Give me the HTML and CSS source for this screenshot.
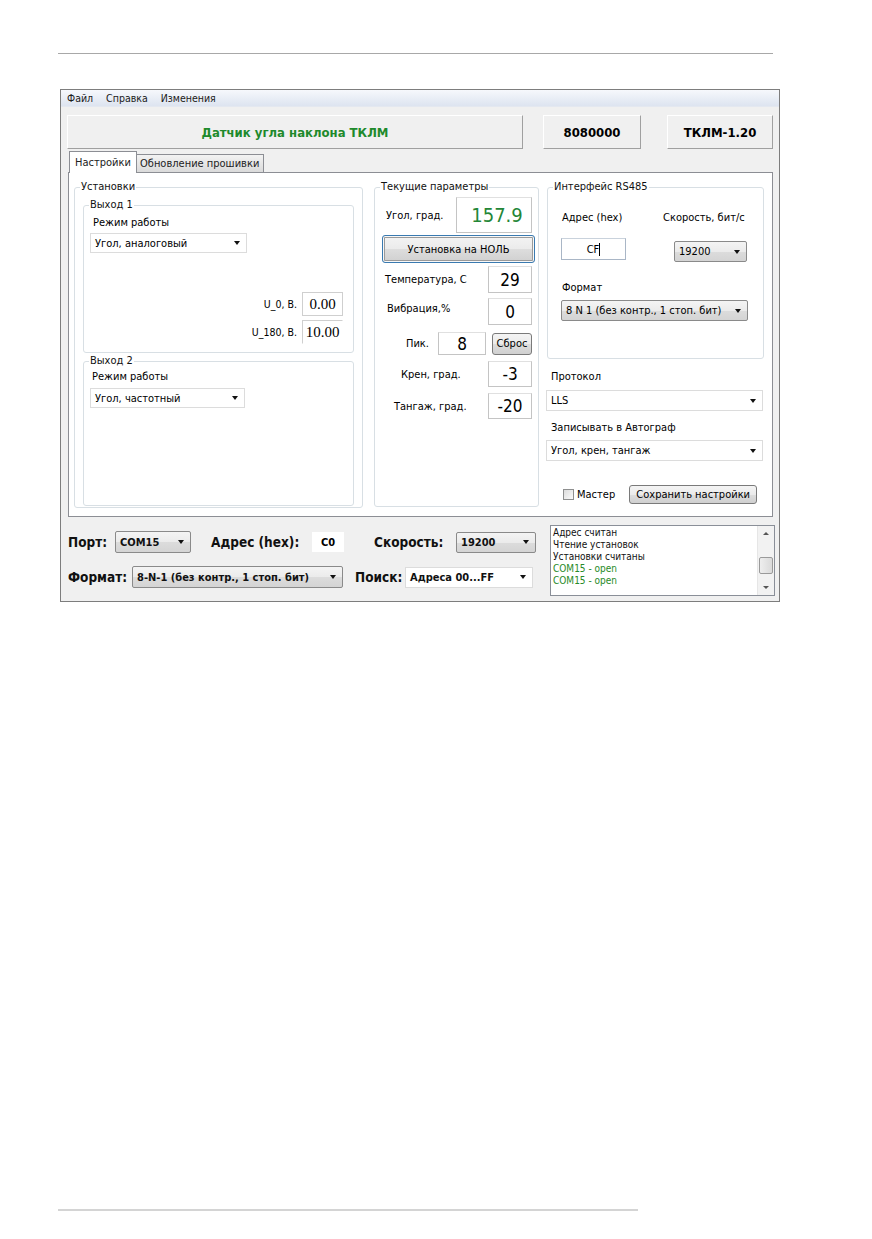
FILE: index.html
```html
<!DOCTYPE html>
<html lang="ru">
<head>
<meta charset="utf-8">
<title>Датчик угла наклона ТКЛМ</title>
<link rel="stylesheet" href="styles.css">
</head>
<body>
<div class="page">
  <div class="rule-top"></div>
  <div class="window">
    <div class="menubar">
      <span>Файл</span><span>Справка</span><span>Изменения</span>
    </div>
    <div class="header">
      <div class="hpanel hp-title">Датчик угла наклона ТКЛМ</div>
      <div class="hpanel hp-serial">8080000</div>
      <div class="hpanel hp-ver">ТКЛМ-1.20</div>
    </div>
    <div class="tabs">
      <div class="tab active">Настройки</div>
      <div class="tab">Обновление прошивки</div>
    </div>
    <div class="tabpage">
      <div class="group g-settings">
        <span class="gtitle">Установки</span>
        <div class="group g-out1">
          <span class="gtitle">Выход 1</span>
          <div class="lbl mode-lbl">Режим работы</div>
          <div class="combo flat c-mode"><span class="ctext">Угол, аналоговый</span><span class="arrow"></span></div>
          <div class="urow u0">
            <span class="ulbl">U_0, В.</span>
            <div class="uinput">0.00</div>
          </div>
          <div class="urow u180">
            <span class="ulbl">U_180, В.</span>
            <div class="uinput open">10.00</div>
          </div>
        </div>
        <div class="group g-out2">
          <span class="gtitle">Выход 2</span>
          <div class="lbl mode-lbl">Режим работы</div>
          <div class="combo flat c-mode2"><span class="ctext">Угол, частотный</span><span class="arrow"></span></div>
        </div>
      </div>

      <div class="group g-current">
        <span class="gtitle">Текущие параметры</span>
        <div class="prow r-angle">
          <span class="plbl">Угол, град.</span>
          <div class="pval big">157.9</div>
        </div>
        <div class="btn focus b-zero">Установка на НОЛЬ</div>
        <div class="prow r-temp">
          <span class="plbl">Температура, С</span>
          <div class="pval">29</div>
        </div>
        <div class="prow r-vib">
          <span class="plbl">Вибрация,%</span>
          <div class="pval">0</div>
        </div>
        <div class="prow r-peak">
          <span class="plbl">Пик.</span>
          <div class="pval peak">8</div>
          <div class="btn b-reset">Сброс</div>
        </div>
        <div class="prow r-roll">
          <span class="plbl">Крен, град.</span>
          <div class="pval">-3</div>
        </div>
        <div class="prow r-pitch">
          <span class="plbl">Тангаж, град.</span>
          <div class="pval">-20</div>
        </div>
      </div>

      <div class="rightcol">
        <div class="group g-rs">
          <span class="gtitle">Интерфейс RS485</span>
          <div class="rs-top">
            <div class="rs-col a">
              <div class="lbl">Адрес (hex)</div>
              <div class="addr-input">CF<span class="caret"></span></div>
            </div>
            <div class="rs-col b">
              <div class="lbl">Скорость, бит/с</div>
              <div class="combo raised c-speed"><span class="ctext">19200</span><span class="arrow"></span></div>
            </div>
          </div>
          <div class="lbl fmt-lbl">Формат</div>
          <div class="combo raised c-fmt"><span class="ctext">8 N 1 (без контр., 1 стоп. бит)</span><span class="arrow"></span></div>
        </div>
        <div class="lbl proto-lbl">Протокол</div>
        <div class="combo flat c-wide"><span class="ctext">LLS</span><span class="arrow"></span></div>
        <div class="lbl auto-lbl">Записывать в Автограф</div>
        <div class="combo flat c-wide c-auto"><span class="ctext">Угол, крен, тангаж</span><span class="arrow"></span></div>
        <div class="save-row">
          <span class="check"></span><span class="check-lbl">Мастер</span>
          <div class="btn b-save">Сохранить настройки</div>
        </div>
      </div>
    </div>

    <div class="bottom">
      <div class="bottom-left">
        <div class="brow r1">
          <span class="blbl w-port">Порт:</span>
          <div class="combo raised bc c-port"><span class="ctext">COM15</span><span class="arrow"></span></div>
          <span class="blbl w-addr">Адрес (hex):</span>
          <div class="binput">C0</div>
          <span class="blbl w-speed">Скорость:</span>
          <div class="combo raised bc c-bspeed"><span class="ctext">19200</span><span class="arrow"></span></div>
        </div>
        <div class="brow r2">
          <span class="blbl w-fmt">Формат:</span>
          <div class="combo raised bc c-bfmt"><span class="ctext">8-N-1 (без контр., 1 стоп. бит)</span><span class="arrow"></span></div>
          <span class="blbl w-search">Поиск:</span>
          <div class="combo flat bc c-search"><span class="ctext">Адреса 00...FF</span><span class="arrow"></span></div>
        </div>
      </div>
      <div class="log">
        <div class="log-lines">
          <div>Адрес считан</div>
          <div>Чтение установок</div>
          <div>Установки считаны</div>
          <div class="ok">COM15 - open</div>
          <div class="ok">COM15 - open</div>
        </div>
        <div class="scroll">
          <span class="sarrow up"></span>
          <span class="thumb"></span>
          <span class="sarrow down"></span>
        </div>
      </div>
    </div>
  </div>
  <div class="rule-bottom"></div>
</div>
</body>
</html>
```

FILE: styles.css
```css
body {
  margin: 0;
  background: #fff;
  font-family: "DejaVu Sans Condensed", "DejaVu Sans", sans-serif;
  font-size: 11px;
  color: #000;
}

.page {
  padding: 53px 0 0 58px;
}

.rule-top {
  width: 715px;
  height: 1px;
  background: #a8a8a8;
}

.rule-bottom {
  width: 580px;
  height: 2px;
  margin-top: 607px;
  background: #d4d4d4;
}

.window {
  width: 718px;
  height: 511px;
  margin: 35px 0 0 2px;
  border: 1px solid #7d7d7d;
  background: #f0f0f0;
}

.menubar {
  height: 16px;
  display: flex;
  gap: 13px;
  align-items: center;
  padding-left: 6px;
  background: linear-gradient(#f6f8fc, #dde4f0);
  border-bottom: 1px solid #e4e8f0;
  font-size: 10.5px;
  color: #1a1a1a;
}

.header {
  display: flex;
  margin: 8px 0 0 6px;
  height: 34px;
}

.hpanel {
  box-sizing: border-box;
  height: 34px;
  display: flex;
  align-items: center;
  justify-content: center;
  border-top: 1px solid #fff;
  border-left: 1px solid #fff;
  border-right: 1px solid #a0a0a0;
  border-bottom: 1px solid #a0a0a0;
  font-weight: bold;
  font-size: 13px;
}

.hp-title { width: 456px; color: #1e8a2c; }
.hp-serial { width: 98px; margin-left: 20px; }
.hp-ver { width: 106px; margin-left: 26px; }

.tabs {
  display: flex;
  align-items: flex-end;
  margin: 2px 0 0 8px;
  height: 21px;
}

.tab {
  box-sizing: border-box;
  height: 18px;
  padding: 0 3px;
  display: flex;
  align-items: center;
  border: 1px solid #8c8e94;
  border-bottom: none;
  background: linear-gradient(#f3f3f3, #dadada);
  color: #222;
}

.tab.active {
  height: 22px;
  width: 68px;
  justify-content: center;
  background: #fff;
  margin-bottom: -1px;
  position: relative;
  z-index: 1;
}

.tab:not(.active) { width: 127px; border-left: none; }

.tabpage {
  box-sizing: border-box;
  width: 705px;
  height: 345px;
  margin-left: 7px;
  border: 1px solid #8c8e94;
  background: #fff;
  display: flex;
  align-items: flex-start;
  padding: 14px 0 0 5px;
}

.group {
  box-sizing: border-box;
  border: 1px solid #d8dfe4;
  border-radius: 3px;
  background: #fff;
}

.gtitle {
  display: block;
  width: max-content;
  margin: -7px 0 0 5px;
  padding: 0 1px;
  line-height: 12px;
  height: 12px;
  background: #fff;
  color: #111;
}

.lbl { line-height: 12px; height: 12px; }

.g-settings { width: 289px; height: 321px; }

.g-out1 {
  width: 271px;
  height: 148px;
  margin: 12px 0 0 8px;
}

.g-out2 {
  width: 271px;
  height: 145px;
  margin: 8px 0 0 8px;
}

.mode-lbl { margin: 6px 0 0 9px; }
.g-out2 .mode-lbl { margin: 4px 0 0 8px; }

.combo {
  box-sizing: border-box;
  height: 20px;
  display: flex;
  align-items: center;
  justify-content: space-between;
  padding: 0 6px 0 4px;
  white-space: nowrap;
}

.combo.flat {
  background: #fff;
  border: 1px solid #dcdcdc;
}

.combo.raised {
  background: linear-gradient(#f4f4f4 0%, #ebebeb 50%, #dcdcdc 51%, #d4d4d4 100%);
  border: 1px solid #8a8a8a;
  border-radius: 2px;
}

.arrow {
  width: 0;
  height: 0;
  border-left: 3.5px solid transparent;
  border-right: 3.5px solid transparent;
  border-top: 4px solid #111;
  flex: none;
}

.c-mode { width: 157px; margin: 4px 0 0 6px; }
.c-mode2 { width: 155px; margin: 5px 0 0 6px; }

.urow {
  display: flex;
  justify-content: flex-end;
  align-items: center;
  margin-right: 10px;
  gap: 5px;
}

.u0 { margin-top: 39px; }
.u180 { margin-top: 4px; }

.uinput {
  box-sizing: border-box;
  width: 41px;
  height: 24px;
  display: flex;
  align-items: center;
  justify-content: center;
  border: 1px solid #cfcfcf;
  font-family: "Liberation Serif", serif;
  font-size: 15px;
}

.uinput.open {
  border-right-color: transparent;
  border-bottom-color: transparent;
}

.ulbl { font-size: 10.5px; }

.g-current {
  width: 165px;
  height: 320px;
  margin-left: 11px;
}

.prow {
  display: flex;
  align-items: center;
  margin-right: 6px;
}

.plbl { flex: 1; }

.pval {
  box-sizing: border-box;
  width: 44px;
  height: 27px;
  display: flex;
  align-items: center;
  justify-content: center;
  border: 1px solid #c4c4c4;
  border-top-color: #e0e0e0;
  font-size: 17px;
}

.pval.big {
  width: 76px;
  height: 36px;
  color: #238636;
  font-size: 20px;
  padding-left: 6px;
}

.r-angle { margin-top: 4px; }
.r-angle .plbl { padding-left: 11px; }
.r-temp { margin-top: 3px; }
.r-temp .plbl { padding-left: 10px; }
.r-vib { margin-top: 5px; }
.r-vib .plbl { padding-left: 12px; margin-top: -6px; }
.r-peak { margin-top: 7px; }
.r-peak .plbl { padding-left: 31px; flex: none; width: 63px; box-sizing: border-box; }
.r-roll { margin-top: 6px; height: 26px; }
.r-roll .plbl { padding-left: 26px; }
.r-pitch { margin-top: 6px; height: 26px; }
.r-pitch .plbl { padding-left: 19px; }
.r-roll .pval, .r-pitch .pval { height: 26px; }

.pval.peak { width: 48px; height: 23px; }

.btn {
  box-sizing: border-box;
  display: flex;
  align-items: center;
  justify-content: center;
  background: linear-gradient(#f4f4f4 0%, #ebebeb 50%, #dddddd 51%, #d0d0d0 100%);
  border: 1px solid #7a7a7a;
  border-radius: 3px;
  white-space: nowrap;
}

.btn.focus {
  border: 1px solid #3a7ab0;
  box-shadow: inset 0 0 0 1px #f8f8f8, inset 0 0 0 2px #9a9a9a;
}

.b-zero {
  width: 153px;
  height: 28px;
  margin: 2px 0 0 7px;
}

.b-reset {
  width: 40px;
  height: 22px;
  margin-left: 6px;
}

.rightcol {
  width: 218px;
  margin-left: 7px;
}

.g-rs {
  width: 217px;
  height: 172px;
  margin-left: 1px;
}

.rs-top { display: flex; margin-top: 19px; }

.rs-col.a { width: 102px; margin-left: 13px; }
.rs-col.a .lbl { margin-left: 1px; }
.rs-col.b { flex: 1; }

.addr-input {
  box-sizing: border-box;
  width: 65px;
  height: 22px;
  margin-top: 14px;
  display: flex;
  align-items: center;
  justify-content: center;
  border: 1px solid #a9b6c6;
  border-top-color: #c9d2dc;
  background: #fff;
}

.caret {
  width: 1px;
  height: 13px;
  background: #000;
  margin-left: 0;
}

.c-speed { width: 73px; height: 21px; margin: 17px 0 0 11px; }

.fmt-lbl { margin: 20px 0 0 14px; }

.c-fmt { width: 187px; height: 21px; margin: 6px 0 0 13px; }

.proto-lbl { margin: 12px 0 0 5px; }
.c-wide { width: 217px; height: 21px; margin-top: 7px; }
.auto-lbl { margin: 11px 0 0 5px; }
.c-auto { margin-top: 6px; }

.save-row {
  display: flex;
  align-items: center;
  margin: 24px 0 0 17px;
  height: 19px;
}

.check {
  box-sizing: border-box;
  width: 11px;
  height: 11px;
  border: 1px solid #8e8f8f;
  background: linear-gradient(135deg, #dcdcdc, #fbfbfb);
}

.check-lbl { margin-left: 3px; }

.b-save { width: 128px; height: 19px; margin-left: 14px; }

.bottom {
  display: flex;
  align-items: flex-start;
}

.bottom-left { padding-left: 7px; }

.brow {
  display: flex;
  align-items: center;
}

.brow.r1 { margin-top: 14px; height: 22px; }
.brow.r2 { margin-top: 13px; height: 22px; }

.blbl {
  font-weight: bold;
  font-size: 13.5px;
  color: #111;
  white-space: nowrap;
}

.w-port { width: 47px; }
.w-addr { width: 101px; margin-left: 20px; }
.w-speed { width: 82px; margin-left: 30px; }
.w-fmt { width: 64px; }
.w-search { width: 50px; margin-left: 12px; }

.combo.bc { font-weight: bold; font-size: 11px; color: #111; }
.c-port { width: 76px; height: 22px; }
.c-bspeed { width: 80px; height: 21px; }
.c-bfmt { width: 211px; height: 22px; }
.c-search { width: 128px; height: 21px; border-color: #e0e0e0; }

.binput {
  box-sizing: border-box;
  width: 32px;
  height: 20px;
  display: flex;
  align-items: center;
  justify-content: center;
  background: #fff;
  font-weight: bold;
}

.log {
  box-sizing: border-box;
  width: 225px;
  height: 71px;
  margin: 8px 0 0 14px;
  border: 1px solid #8a8f98;
  background: #fff;
  display: flex;
}

.log-lines {
  flex: 1;
  padding: 1px 0 0 2px;
  font-size: 10px;
  line-height: 12px;
  color: #111;
}

.log-lines .ok { color: #278a27; }

.scroll {
  width: 16px;
  display: flex;
  flex-direction: column;
  align-items: center;
  background: #f2f2f2;
  border-left: 1px solid #e6e6e6;
}

.sarrow {
  width: 0;
  height: 0;
  border-left: 3px solid transparent;
  border-right: 3px solid transparent;
}

.sarrow.up { border-bottom: 3px solid #555; margin-top: 6px; }
.sarrow.down { border-top: 3px solid #555; margin-top: auto; margin-bottom: 6px; }

.thumb {
  box-sizing: border-box;
  width: 14px;
  height: 17px;
  margin-top: 22px;
  border: 1px solid #9a9a9a;
  border-radius: 2px;
  background: linear-gradient(90deg, #eeeeee, #dadada);
}
```
